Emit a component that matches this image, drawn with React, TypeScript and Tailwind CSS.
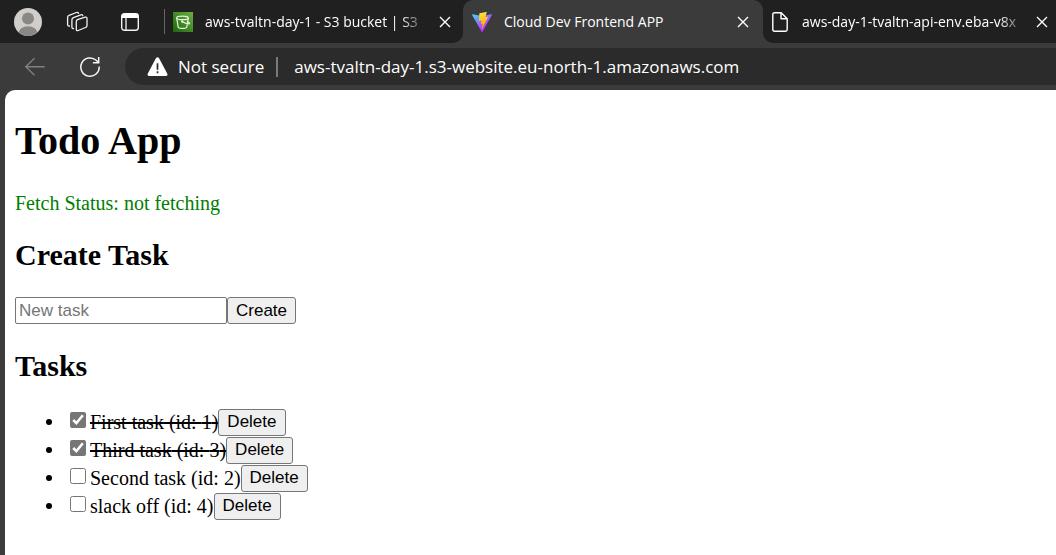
import { useState } from 'react';

type Task = { id: number; title: string; done: boolean };

const initialTasks: Task[] = [
  { id: 1, title: 'First task', done: true },
  { id: 3, title: 'Third task', done: true },
  { id: 2, title: 'Second task', done: false },
  { id: 4, title: 'slack off', done: false },
];

function CloseButton({ label }: { label: string }) {
  return (
    <button type="button" aria-label={label} className="flex size-5 shrink-0 items-center justify-center text-white">
      <svg width="12" height="12" viewBox="0 0 12 12" fill="none" stroke="currentColor" strokeWidth="1.4">
        <path d="M1 1l10 10M11 1L1 11" />
      </svg>
    </button>
  );
}

function BucketIcon() {
  return (
    <svg width="20" height="20" viewBox="0 0 20 20" className="shrink-0" aria-hidden="true">
      <defs>
        <linearGradient id="bucket" x1="0" y1="20" x2="20" y2="0" gradientUnits="userSpaceOnUse">
          <stop stopColor="#1b660f" />
          <stop offset="1" stopColor="#6cae3e" />
        </linearGradient>
      </defs>
      <path fill="url(#bucket)" d="M0 0h20v20H0z" />
      <g fill="none" stroke="#e4f3dc" strokeWidth="1.2" strokeLinecap="round" strokeLinejoin="round">
        <ellipse cx="9.5" cy="5.9" rx="5.8" ry="1.7" />
        <path d="M3.7 6.1l1.5 9c.5 1.8 8.1 1.8 8.6 0l1.5-9M9.2 9.5c2.6 1.6 5.6 2.6 7 2.4 1.1-.4-.3-1.6-1.9-2.5" />
        <circle cx="9.2" cy="9.5" r=".6" />
      </g>
    </svg>
  );
}

function ViteIcon() {
  return (
    <svg width="20" height="20" viewBox="0 0 256 257" className="shrink-0" aria-hidden="true">
      <defs>
        <linearGradient id="viteBody" x1="-.8%" x2="57.6%" y1="7.7%" y2="78.4%">
          <stop stopColor="#41D1FF" />
          <stop offset="1" stopColor="#BD34FE" />
        </linearGradient>
        <linearGradient id="viteBolt" x1="43.4%" x2="50.3%" y1="2.2%" y2="89%">
          <stop stopColor="#FFEA83" />
          <stop offset=".083" stopColor="#FFDD35" />
          <stop offset="1" stopColor="#FFA800" />
        </linearGradient>
      </defs>
      <path
        fill="url(#viteBody)"
        d="M255.153 37.938L134.897 252.976c-2.483 4.44-8.862 4.466-11.382.048L.875 37.958c-2.746-4.814 1.371-10.646 6.827-9.67l120.385 21.517a6.537 6.537 0 0 0 2.322-.004l117.867-21.483c5.438-.991 9.574 4.796 6.877 9.62Z"
      />
      <path
        fill="url(#viteBolt)"
        d="M185.432.063L96.44 17.501a3.268 3.268 0 0 0-2.634 3.014l-5.474 92.456a3.268 3.268 0 0 0 3.997 3.378l24.777-5.718c2.318-.535 4.413 1.507 3.936 3.838l-7.361 36.047c-.495 2.426 1.782 4.5 4.151 3.78l15.304-4.649c2.372-.72 4.652 1.36 4.15 3.788l-11.698 56.621c-.732 3.542 3.979 5.473 5.943 2.437l1.313-2.028l72.516-144.72c1.215-2.423-.88-5.186-3.54-4.672l-25.505 4.922c-2.396.462-4.435-1.77-3.759-4.114l16.646-57.705c.677-2.35-1.37-4.583-3.769-4.113Z"
      />
    </svg>
  );
}

function TabStrip() {
  return (
    <div className="flex h-[43px] text-sm text-white">
      <div className="flex w-[463px] shrink-0 items-center rounded-br-[10px] bg-[#202020] pr-2 pl-3.5">
        <button type="button" aria-label="Profile" className="shrink-0">
          <svg width="28" height="28" viewBox="0 0 28 28">
            <defs>
              <clipPath id="avatar">
                <circle cx="14" cy="14" r="14" />
              </clipPath>
            </defs>
            <g clipPath="url(#avatar)">
              <path fill="#d0cecb" d="M0 0h28v28H0z" />
              <circle cx="14" cy="10.5" r="6" fill="#8b8784" />
              <ellipse cx="14" cy="25" rx="9.5" ry="6.8" fill="#8b8784" />
            </g>
          </svg>
        </button>
        <button type="button" aria-label="Workspaces" className="ml-6 shrink-0">
          <svg width="23" height="22" viewBox="0 0 23 22" fill="none" stroke="#f2f2f2" strokeWidth="1.3" strokeLinejoin="round" strokeLinecap="round">
            <path d="M11.5 8.7l7.6-2.5q1.9-.5 1.9 1.4v6.9q0 1.5-1.5 2l-7.3 3q-1.9.7-1.9-1.3v-7.3q0-1.6 1.2-2.2z" />
            <path d="M7.5 17.5q-1.6.4-1.6-1.4V9q0-1.7 1.5-2.3l7.4-2.9q1.7-.6 2 .9" />
            <path d="M3.5 15q-1.9.3-1.9-1.5V6.6q0-1.6 1.5-2.2l7.3-2.9q1.7-.5 2.1.8" />
          </svg>
        </button>
        <button type="button" aria-label="Tab actions" className="ml-[31px] shrink-0">
          <svg width="20" height="20" viewBox="0 0 20 20" fill="none">
            <rect x="1.7" y="1.7" width="16.6" height="16.6" rx="2.7" stroke="#f4f4f4" strokeWidth="1.4" />
            <path d="M1.5 6V4q0-2.5 2.5-2.5h12q2.5 0 2.5 2.5v2z" fill="#fff" />
            <path d="M6 6v12" stroke="#f4f4f4" strokeWidth="1.3" />
          </svg>
        </button>
        <div className="ml-6 h-[25px] w-px shrink-0 bg-[#666]" />
        <div className="ml-2 flex min-w-0 flex-1 items-center">
          <BucketIcon />
          <span className="mr-2 ml-3 min-w-0 flex-1 mask-r-from-88% whitespace-nowrap">
            aws-tvaltn-day-1 - S3 bucket | S3
          </span>
          <CloseButton label="Close S3 bucket tab" />
        </div>
      </div>
      <div className="w-[300px] shrink-0 bg-[#202020]">
        <div className="flex h-full items-center rounded-t-[10px] bg-[#3b3b3b] pr-2.5 pl-[9px]">
          <ViteIcon />
          <span className="ml-3 flex-1 whitespace-nowrap">Cloud Dev Frontend APP</span>
          <CloseButton label="Close Cloud Dev Frontend tab" />
        </div>
      </div>
      <div className="flex min-w-0 flex-1 items-center rounded-bl-[10px] bg-[#202020] pr-1 pl-[9px]">
        <svg width="16" height="20" viewBox="0 0 16 20" fill="none" stroke="#fff" strokeWidth="1.4" strokeLinejoin="round" className="shrink-0" aria-hidden="true">
          <path d="M2.5.8h6.7l6 6v10.7q0 1.7-1.7 1.7h-11Q.8 19.2.8 17.5v-15Q.8.8 2.5.8zM9 .8v6h6" />
        </svg>
        <span className="mr-1.5 ml-3.5 min-w-0 flex-1 mask-r-from-88% whitespace-nowrap">
          aws-day-1-tvaltn-api-env.eba-v8x
        </span>
        <CloseButton label="Close API tab" />
      </div>
    </div>
  );
}

function Toolbar() {
  return (
    <div className="flex h-[47px] items-center">
      <button type="button" aria-label="Back" className="ml-6 shrink-0">
        <svg width="22" height="20" viewBox="0 0 22 20" fill="none" stroke="#808080" strokeWidth="1.4">
          <path d="M10.5 1.2L1.8 9.7l8.7 8.5M1.8 9.7h19" />
        </svg>
      </button>
      <button type="button" aria-label="Refresh" className="ml-[33px] shrink-0">
        <svg width="22" height="22" viewBox="0 0 22 22" fill="none" stroke="#f4f4f4" strokeWidth="1.5">
          <path d="M20.2 10.5A9.2 9.2 0 1 1 17.2 4.3L19.5 6.5M19.7 1v5.7h-5.8" />
        </svg>
      </button>
      <div className="ml-6 flex h-[37px] flex-1 items-center overflow-hidden rounded-l-full bg-[#2b2b2b] pl-[22px] text-[17px] whitespace-nowrap text-white">
        <svg width="21" height="20" viewBox="0 0 21 20" className="shrink-0" aria-hidden="true">
          <path d="M8.8 1.5q1.7-2.5 3.4 0l8 15q1 2.5-1.7 2.5h-16Q-.2 19 .8 16.5z" fill="#fff" />
          <path d="M10.5 6.2v6.5M10.5 14.2v2" stroke="#2b2b2b" strokeWidth="1.7" />
        </svg>
        <span className="ml-2.5">Not secure</span>
        <div className="mr-4 ml-3 h-5 w-0.5 shrink-0 bg-[#7a7a7a]" />
        <span>aws-tvaltn-day-1.s3-website.eu-north-1.amazonaws.com</span>
      </div>
    </div>
  );
}

const buttonClass =
  'h-[27px] rounded-[3px] border border-[#767676] bg-[#efefef] px-2 font-["Liberation_Sans",sans-serif] text-[17px] leading-6 text-black';

export default function App() {
  const [tasks, setTasks] = useState(initialTasks);
  const [title, setTitle] = useState('');

  const toggle = (id: number) => setTasks(tasks.map((t) => (t.id === id ? { ...t, done: !t.done } : t)));
  const create = () => {
    if (!title.trim()) return;
    const id = Math.max(0, ...tasks.map((t) => t.id)) + 1;
    setTasks([...tasks, { id, title, done: false }]);
    setTitle('');
  };

  return (
    <div className="flex min-h-screen flex-col bg-[#3b3b3b]">
      <header className="font-['Open_Sans',sans-serif]">
        <TabStrip />
        <Toolbar />
      </header>
      <main className="ml-[5px] flex-1 rounded-tl-[10px] bg-white pt-7 pl-2.5 font-['Liberation_Serif',serif] text-[20px] leading-6 text-black">
        <h1 className="text-[40px] leading-[46px] font-bold">Todo App</h1>
        <p className="mt-[27px] text-[#008000]">Fetch Status: not fetching</p>
        <h2 className="mt-[23px] text-[30px] leading-[34px] font-bold">Create Task</h2>
        <form
          className="mt-[25px] flex"
          onSubmit={(e) => {
            e.preventDefault();
            create();
          }}
        >
          <input
            type="text"
            aria-label="New task"
            placeholder="New task"
            value={title}
            onChange={(e) => setTitle(e.target.value)}
            className="h-[27px] w-[212px] rounded-[2px] border border-[#767676] px-[3px] font-['Liberation_Sans',sans-serif] text-[17px] placeholder:text-[#757575]"
          />
          <button type="submit" className={buttonClass}>
            Create
          </button>
        </form>
        <h2 className="mt-[25px] text-[30px] leading-[34px] font-bold">Tasks</h2>
        <ul className="mt-6 list-disc pl-[50px]">
          {tasks.map((task) => (
            <li key={task.id} className="h-7 leading-7">
              <div className="flex items-center">
                <label className="flex items-center">
                  <input
                    type="checkbox"
                    checked={task.done}
                    onChange={() => toggle(task.id)}
                    className="mr-1 mb-1 ml-[5px] size-4 accent-[#767676]"
                  />
                  <span className={task.done ? 'line-through decoration-2' : ''}>
                    {task.title} (id: {task.id})
                  </span>
                </label>
                <button type="button" className={buttonClass} onClick={() => setTasks(tasks.filter((t) => t.id !== task.id))}>
                  Delete
                </button>
              </div>
            </li>
          ))}
        </ul>
      </main>
    </div>
  );
}
